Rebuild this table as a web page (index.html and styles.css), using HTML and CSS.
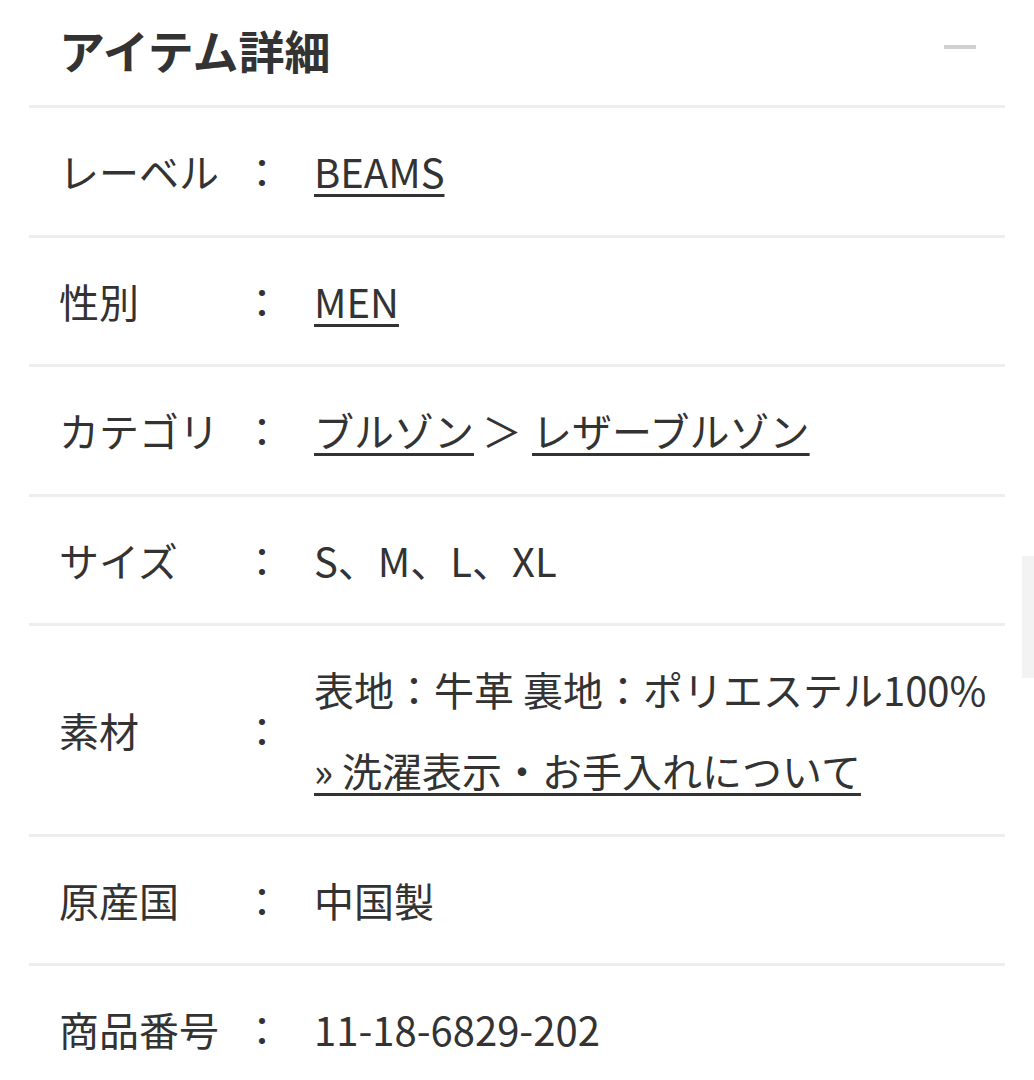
FILE: index.html
```html
<!DOCTYPE html>
<html lang="ja">
<head>
<meta charset="utf-8">
<title>アイテム詳細</title>
<link rel="stylesheet" href="styles.css">
</head>
<body>
<section class="details">
  <header class="details-head">
    <h2 class="details-title">アイテム詳細</h2>
    <span class="toggle" aria-label="閉じる"></span>
  </header>
  <dl class="spec">
    <div class="spec-row">
      <dt class="spec-label">レーベル</dt>
      <dd class="spec-colon">：</dd>
      <dd class="spec-value"><a class="link" href="#">BEAMS</a></dd>
    </div>
    <div class="spec-row">
      <dt class="spec-label">性別</dt>
      <dd class="spec-colon">：</dd>
      <dd class="spec-value"><a class="link" href="#">MEN</a></dd>
    </div>
    <div class="spec-row">
      <dt class="spec-label">カテゴリ</dt>
      <dd class="spec-colon">：</dd>
      <dd class="spec-value"><a class="link" href="#">ブルゾン</a><span class="crumb-sep">＞</span><a class="link" href="#">レザーブルゾン</a></dd>
    </div>
    <div class="spec-row">
      <dt class="spec-label">サイズ</dt>
      <dd class="spec-colon">：</dd>
      <dd class="spec-value">S、M、L、XL</dd>
    </div>
    <div class="spec-row">
      <dt class="spec-label">素材</dt>
      <dd class="spec-colon">：</dd>
      <dd class="spec-value">
        <p class="value-line">表地：牛革 裏地：ポリエステル100%</p>
        <p class="value-line value-line-sub"><a class="link" href="#">» 洗濯表示・お手入れについて</a></p>
      </dd>
    </div>
    <div class="spec-row">
      <dt class="spec-label">原産国</dt>
      <dd class="spec-colon">：</dd>
      <dd class="spec-value">中国製</dd>
    </div>
    <div class="spec-row">
      <dt class="spec-label">商品番号</dt>
      <dd class="spec-colon">：</dd>
      <dd class="spec-value">11-18-6829-202</dd>
    </div>
  </dl>
</section>
<div class="scroll-thumb"></div>
</body>
</html>
```

FILE: styles.css
```css
* {
  box-sizing: border-box;
}

html, body {
  margin: 0;
  padding: 0;
  background: #ffffff;
}

body {
  font-family: "Noto Sans CJK JP", "Noto Sans", sans-serif;
  color: #333333;
  overflow: hidden;
}

.details {
  margin: 0 29px;
}

.details-head {
  display: flex;
  align-items: center;
  justify-content: space-between;
  padding: 20px 29px 27px 30px;
  border-bottom: 3px solid #eeeeee;
}

.details-title {
  margin: 0;
  font-size: 46px;
  line-height: 58px;
  font-weight: 700;
  color: #333333;
}

.toggle {
  display: block;
  width: 32px;
  height: 4px;
  background: #d0d0d0;
  margin-top: -4px;
}

.spec {
  margin: 0;
}

.spec-row {
  display: grid;
  grid-template-columns: 183px 40px 1fr;
  align-items: center;
  padding: 34.25px 0 34.25px 30px;
  border-bottom: 3px solid #eeeeee;
  font-size: 40px;
  line-height: 58px;
}

.spec-label,
.spec-colon,
.spec-value {
  margin: 0;
}

.spec-colon {
  text-align: center;
}

.spec-value {
  padding-left: 32px;
  white-space: nowrap;
}

.crumb-sep {
  margin: 0 10px 0 8px;
}

.value-line {
  margin: 0;
}

.value-line-sub {
  margin-top: 23px;
}

.link {
  color: #333333;
  text-decoration: underline;
  text-decoration-thickness: 3px;
  text-underline-offset: 6px;
}

.scroll-thumb {
  position: fixed;
  right: 0;
  top: 556px;
  width: 12px;
  height: 122px;
  background: #f3f3f3;
}
```
